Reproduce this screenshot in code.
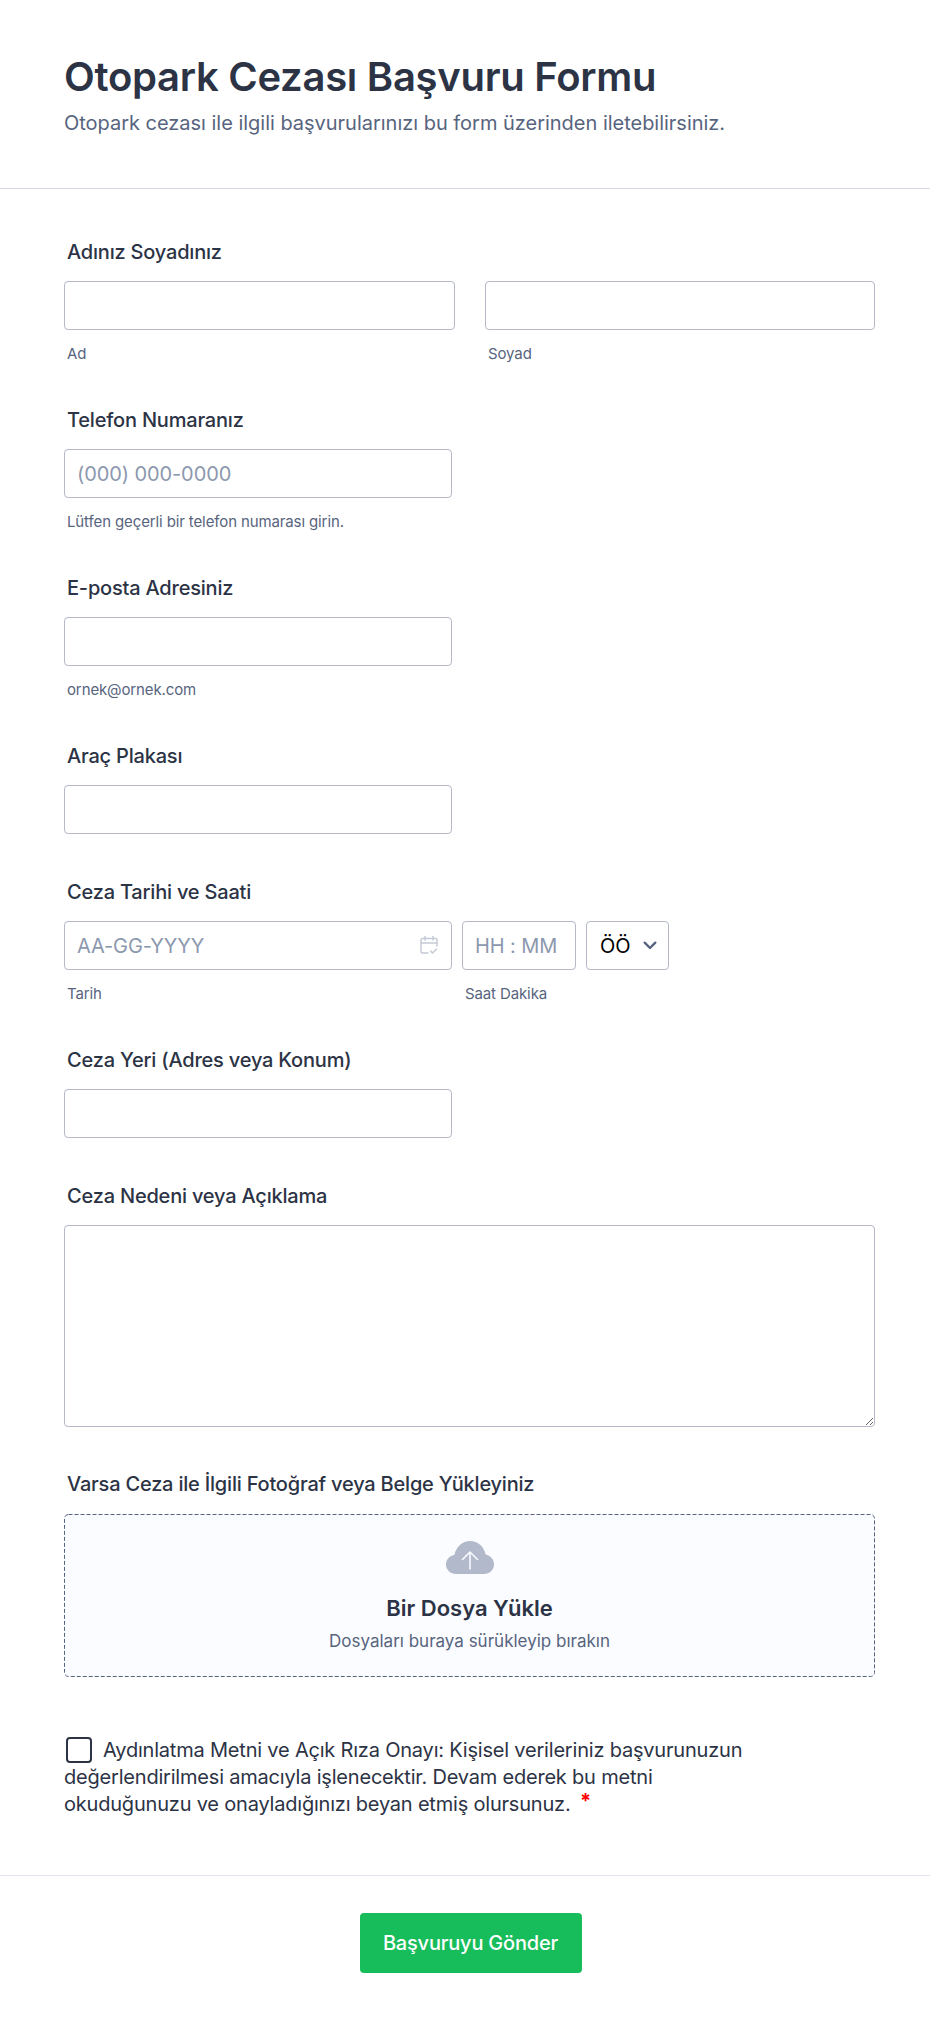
<template>
  <main class="page">
    <header class="head">
      <h1>Otopark Cezası Başvuru Formu</h1>
      <p>Otopark cezası ile ilgili başvurularınızı bu form üzerinden iletebilirsiniz.</p>
    </header>

    <form class="form" @submit.prevent>
      <section class="field">
        <label class="label">Adınız Soyadınız</label>
        <div class="two">
          <div>
            <input class="input" type="text" />
            <span class="sub">Ad</span>
          </div>
          <div>
            <input class="input" type="text" />
            <span class="sub">Soyad</span>
          </div>
        </div>
      </section>

      <section class="field">
        <label class="label">Telefon Numaranız</label>
        <input class="input single" type="text" placeholder="(000) 000-0000" />
        <span class="sub">Lütfen geçerli bir telefon numarası girin.</span>
      </section>

      <section class="field">
        <label class="label">E-posta Adresiniz</label>
        <input class="input single" type="text" />
        <span class="sub">ornek@ornek.com</span>
      </section>

      <section class="field plain">
        <label class="label">Araç Plakası</label>
        <input class="input single" type="text" />
      </section>

      <section class="field">
        <label class="label">Ceza Tarihi ve Saati</label>
        <div class="datetime">
          <div class="date-col">
            <div class="date-wrap">
              <input class="input" type="text" placeholder="AA-GG-YYYY" />
              <svg class="cal" width="20" height="20" viewBox="0 0 20 20" fill="none" stroke="#c5cad6" stroke-width="1.5" stroke-linecap="round" stroke-linejoin="round">
                <path d="M9 18H3.500A1.500 1.500 0 0 1 2 16.500V5A1.500 1.500 0 0 1 3.500 3.500h13A1.500 1.500 0 0 1 18 5v6" />
                <path d="M2 8h16M6 1.500V5M14 1.500V5" />
                <path d="M11.500 16l2 2 4-4" />
              </svg>
            </div>
            <span class="sub">Tarih</span>
          </div>
          <div class="time-col">
            <input class="input" type="text" placeholder="HH : MM" />
            <span class="sub">Saat Dakika</span>
          </div>
          <div class="ampm">
            <span>ÖÖ</span>
            <svg width="14" height="9" viewBox="0 0 14 9" fill="none" stroke="#57647e" stroke-width="2.400" stroke-linecap="round" stroke-linejoin="round">
              <path d="M1.700 1.700 7 7l5.300-5.300" />
            </svg>
          </div>
        </div>
      </section>

      <section class="field plain">
        <label class="label">Ceza Yeri (Adres veya Konum)</label>
        <input class="input single" type="text" />
      </section>

      <section class="field plain area-field">
        <label class="label">Ceza Nedeni veya Açıklama</label>
        <textarea class="area"></textarea>
      </section>

      <section class="field upload-field">
        <label class="label">Varsa Ceza ile İlgili Fotoğraf veya Belge Yükleyiniz</label>
        <div class="upload">
          <svg class="dash" width="811" height="163" viewBox="0 0 811 163" fill="none">
            <rect x="0.500" y="0.500" width="810" height="162" rx="4" stroke="#57647e" stroke-dasharray="4 2" />
          </svg>
          <svg width="48" height="33" viewBox="0 0 48 33">
            <path fill="#b1b9cb" d="M10 33C4.500 33 0 28.800 0 23.500 0 18.600 3.600 14.600 8.400 14 10 6 16.400 0 24 0c7.700 0 14.200 5.800 15.700 13.600C44.400 14.400 48 18.500 48 23.500 48 28.800 43.500 33 38 33Z" />
            <path fill="none" stroke="#f8f9fd" stroke-width="1.600" stroke-linecap="round" stroke-linejoin="round" d="M24 28V11M16.500 18.500 24 11l7.500 7.500" />
          </svg>
          <strong>Bir Dosya Yükle</strong>
          <span>Dosyaları buraya sürükleyip bırakın</span>
        </div>
      </section>

      <section class="consent">
        <p><span class="box"></span>Aydınlatma Metni ve Açık Rıza Onayı: Kişisel verileriniz başvurunuzun değerlendirilmesi amacıyla işlenecektir. Devam ederek bu metni okuduğunuzu ve onayladığınızı beyan etmiş olursunuz. <span class="req">*</span></p>
      </section>
    </form>

    <footer class="foot">
      <button type="button">Başvuruyu Gönder</button>
    </footer>
  </main>
</template>

<style>
html, body { margin: 0; background: #fff; }
</style>

<style scoped>
.page {
  width: 930px;
  height: 2022px;
  background: #fff;
  font-family: Inter, "Liberation Sans", sans-serif;
  color: #2c3345;
  overflow: hidden;
  box-sizing: border-box;
}
.head {
  height: 189px;
  box-sizing: border-box;
  padding: 52px 64px 0;
  border-bottom: 1px solid #d8dae9;
}
h1 {
  margin: 0;
  font-size: 40px;
  line-height: 50px;
  font-weight: 600;
  letter-spacing: -0.28px;
}
.head p {
  margin: 7px 0 0;
  font-size: 20px;
  line-height: 28px;
  letter-spacing: -0.02px;
  color: #57647e;
}
.form {
  padding: 49px 55px 0 64px;
}
.field {
  height: 168px;
}
.field.plain { height: 136px; }
.label {
  display: block;
  margin: 0 0 15px 3px;
  font-size: 20px;
  line-height: 28px;
  font-weight: 500;
  letter-spacing: -0.2px;
}
.input {
  display: block;
  width: 100%;
  height: 49px;
  box-sizing: border-box;
  padding: 0 12px;
  border: 1px solid #b5b9c8;
  border-radius: 4px;
  background: #fff;
  font: 400 20px Inter, sans-serif;
  letter-spacing: -0.1px;
  color: #2c3345;
  outline: none;
}
.input::placeholder { color: #8c98ae; opacity: 1; }
.input.single { width: 388px; }
.sub {
  display: block;
  margin: 15px 0 0 3px;
  font-size: 15px;
  line-height: 18px;
  letter-spacing: -0.12px;
  color: #57647e;
}
.two {
  display: grid;
  grid-template-columns: 391px 390px;
  gap: 30px;
}
.datetime {
  display: flex;
  gap: 10px;
}
.date-col { width: 388px; }
.date-wrap { position: relative; }
.cal { position: absolute; right: 13px; top: 14px; }
.time-col { width: 114px; }
.ampm {
  width: 83px;
  height: 49px;
  box-sizing: border-box;
  padding: 0 11px 0 13px;
  border: 1px solid #b5b9c8;
  border-radius: 4px;
  display: flex;
  align-items: center;
  justify-content: space-between;
  font-size: 20px;
  color: #000;
}
.area {
  display: block;
  width: 100%;
  height: 202px;
  box-sizing: border-box;
  padding: 10px 12px;
  border: 1px solid #b5b9c8;
  border-radius: 4px;
  outline: none;
}
.field.area-field { height: 288px; }
.upload-field { height: 254px; }
.upload-field .label { margin-bottom: 16px; }
.upload {
  position: relative;
  height: 163px;
  box-sizing: border-box;
  padding-top: 27px;
  border-radius: 4px;
  background: #fbfcff;
  display: flex;
  flex-direction: column;
  align-items: center;
}
.dash { position: absolute; left: 0; top: 0; }
.upload strong {
  margin-top: 19px;
  font-size: 22px;
  line-height: 30px;
  font-weight: 600;
}
.upload span {
  margin-top: 6px;
  font-size: 17px;
  line-height: 24px;
  color: #57647e;
}
.consent {
  padding-top: 13px;
}
.consent p {
  margin: 0;
  font-size: 20px;
  line-height: 27px;
  letter-spacing: -0.2px;
  width: 680px;
}
.box {
  display: inline-block;
  width: 26px;
  height: 26px;
  box-sizing: border-box;
  margin: 0 11px 0 2px;
  border: 2px solid #2c3345;
  border-radius: 4px;
  vertical-align: -6px;
}
.req {
  color: #f00;
  font-weight: 700;
  margin-left: 4px;
  line-height: 0;
  vertical-align: 3px;
}
.foot {
  margin-top: 57px;
  border-top: 1px solid #e3e5ee;
  padding: 37px 0 0 11px;
  display: flex;
  justify-content: center;
}
button {
  width: 222px;
  height: 60px;
  border: 0;
  border-radius: 4px;
  background: #18bd5b;
  color: #fff;
  font: 500 20px Inter, sans-serif;
  letter-spacing: -0.2px;
}
</style>
